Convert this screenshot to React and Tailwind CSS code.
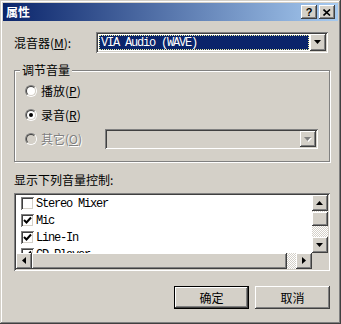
import React from "react";

const raised =
  "shadow-[inset_-1px_-1px_#404040,inset_1px_1px_#fff,inset_-2px_-2px_#808080,inset_2px_2px_#d4d0c8]";
const sunken =
  "shadow-[inset_1px_1px_#808080,inset_-1px_-1px_#fff,inset_2px_2px_#404040,inset_-2px_-2px_#d4d0c8]";
const cjk = "font-['SimSun','Noto_Sans_CJK_SC',sans-serif]";
const mono = "font-['Liberation_Mono','Noto_Sans_CJK_SC',monospace]";

function Arrow({ dir = "down", disabled = false }) {
  const pts = {
    down: "0,0 7,0 3.5,4",
    up: "0,4 7,4 3.5,0",
    left: "4,0 4,7 0,3.5",
    right: "0,0 0,7 4,3.5",
  }[dir];
  const vertical = dir === "down" || dir === "up";
  return (
    <svg width={vertical ? 8 : 5} height={vertical ? 5 : 8} viewBox={vertical ? "0 0 8 5" : "0 0 5 8"}>
      {disabled && <polygon points={pts} fill="#fff" transform="translate(1,1)" />}
      <polygon points={pts} fill={disabled ? "#808080" : "#000"} />
    </svg>
  );
}

function ScrollBtn({ dir, className = "" }) {
  return (
    <div className={`w-[16px] h-[16px] bg-[#d4d0c8] ${raised} flex items-center justify-center ${className}`}>
      <Arrow dir={dir} />
    </div>
  );
}

function Radio({ checked, disabled }) {
  return (
    <div className="w-[12px] h-[12px] rounded-full border border-t-[#808080] border-l-[#808080] border-r-white border-b-white">
      <div
        className={`w-full h-full rounded-full border border-t-[#404040] border-l-[#404040] border-r-[#d4d0c8] border-b-[#d4d0c8] flex items-center justify-center ${
          disabled ? "bg-[#d4d0c8]" : "bg-white"
        }`}
      >
        {checked && <div className="w-[4px] h-[4px] rounded-full bg-black" />}
      </div>
    </div>
  );
}

function Check({ checked }) {
  return (
    <div className={`w-[13px] h-[13px] bg-white ${sunken} flex items-center justify-center shrink-0`}>
      {checked && (
        <svg width="9" height="9" viewBox="0 0 9 9">
          <polyline points="1,4 3.5,6.5 8,1.5" fill="none" stroke="#000" strokeWidth="2" />
        </svg>
      )}
    </div>
  );
}

const items = [
  { name: "Stereo Mixer", on: false },
  { name: "Mic", on: true },
  { name: "Line-In", on: true },
  { name: "CD Player", on: true },
];

export default function App() {
  return (
    <div
      className={`w-[341px] h-[324px] bg-[#d4d0c8] p-[3px] text-[12px] leading-[12px] text-black ${cjk} shadow-[inset_-1px_-1px_#404040,inset_1px_1px_#d4d0c8,inset_-2px_-2px_#808080,inset_2px_2px_#fff]`}
    >
      {/* Title bar */}
      <div className="h-[18px] flex items-center pl-[3px] pr-[3px] bg-[linear-gradient(to_right,#0a246a,#a6caf0)]">
        <span className="text-white font-bold text-[12px]">属性</span>
        <div className="ml-auto flex gap-[2px]">
          <div className={`w-[16px] h-[14px] bg-[#d4d0c8] ${raised} flex items-center justify-center font-['Liberation_Sans',sans-serif] font-bold text-[11px] leading-none`}>
            ?
          </div>
          <div className={`w-[16px] h-[14px] bg-[#d4d0c8] ${raised} flex items-center justify-center`}>
            <svg width="8" height="7" viewBox="0 0 8 7">
              <path d="M0.5 0.5 L7 6.5 M7 0.5 L0.5 6.5" stroke="#000" strokeWidth="1.6" />
            </svg>
          </div>
        </div>
      </div>

      <div className="pl-[11px] pr-[8px]">
        {/* Mixer row */}
        <div className="mt-[11px] flex items-center h-[21px]">
          <span className="w-[82px]">
            混音器(<span className="underline">M</span>):
          </span>
          <div className={`w-[232px] h-[21px] bg-white ${sunken} p-[2px] flex`}>
            <div className="flex-1 m-[1px] bg-[#0a246a] border border-dotted border-[#f0f0a0] flex items-center px-[1px]">
              <span className={`text-white text-[12px] tracking-[-1.2px] ${mono}`}>VIA Audio (WAVE)</span>
            </div>
            <div className={`w-[16px] h-[17px] bg-[#d4d0c8] ${raised} flex items-center justify-center`}>
              <Arrow dir="down" />
            </div>
          </div>
        </div>

        {/* Group box */}
        <div className="relative mt-[17px] h-[92px] border border-[#808080] shadow-[inset_1px_1px_#fff,1px_1px_#fff] pt-[8px] pl-[10px] pr-[11px]">
          <span className="absolute -top-[7px] left-[5px] bg-[#d4d0c8] px-[2px]">调节音量</span>
          <div className="h-[24px] flex items-center gap-[4px]">
            <Radio />
            <span>
              播放(<span className="underline">P</span>)
            </span>
          </div>
          <div className="h-[24px] flex items-center gap-[4px]">
            <Radio checked />
            <span>
              录音(<span className="underline">R</span>)
            </span>
          </div>
          <div className="h-[24px] flex items-center gap-[4px]">
            <Radio disabled />
            <span className="text-[#808080] [text-shadow:1px_1px_0_#fff]">
              其它(<span className="underline">O</span>)
            </span>
            <div className={`ml-auto w-[213px] h-[20px] bg-[#d4d0c8] ${sunken} p-[2px] flex justify-end`}>
              <div className={`w-[16px] h-[16px] bg-[#d4d0c8] ${raised} flex items-center justify-center`}>
                <Arrow dir="down" disabled />
              </div>
            </div>
          </div>
        </div>

        <div className="mt-[12px] h-[12px]">显示下列音量控制:</div>

        {/* List box */}
        <div className={`mt-[7px] h-[78px] bg-white ${sunken} p-[2px] flex flex-col`}>
          <div className="flex flex-1 min-h-0">
            <div className="flex-1 overflow-hidden">
              {items.map((it) => (
                <div key={it.name} className="h-[17px] flex items-center pl-[5px] gap-[2px]">
                  <Check checked={it.on} />
                  <span className={`text-[12px] tracking-[-1.2px] ${mono}`}>{it.name}</span>
                </div>
              ))}
            </div>
            <div className="w-[16px] flex flex-col bg-[repeating-conic-gradient(#fff_0_25%,#d4d0c8_0_50%)] bg-[length:2px_2px]">
              <ScrollBtn dir="up" />
              <div className={`mt-[1px] h-[14px] bg-[#d4d0c8] ${raised}`} />
              <ScrollBtn dir="down" className="mt-auto" />
            </div>
          </div>
          <div className="h-[16px] flex">
            <ScrollBtn dir="left" />
            <div className={`w-[255px] bg-[#d4d0c8] ${raised}`} />
            <div className="flex-1 bg-[repeating-conic-gradient(#fff_0_25%,#d4d0c8_0_50%)] bg-[length:2px_2px]" />
            <ScrollBtn dir="right" />
            <div className="w-[16px] bg-[#d4d0c8]" />
          </div>
        </div>

        {/* Buttons */}
        <div className="mt-[15px] flex justify-end gap-[6px]">
          <div className="w-[75px] h-[23px] border border-black">
            <div className={`w-full h-full ${raised} flex items-center justify-center`}>确定</div>
          </div>
          <div className={`w-[75px] h-[23px] ${raised} flex items-center justify-center`}>取消</div>
        </div>
      </div>
    </div>
  );
}
